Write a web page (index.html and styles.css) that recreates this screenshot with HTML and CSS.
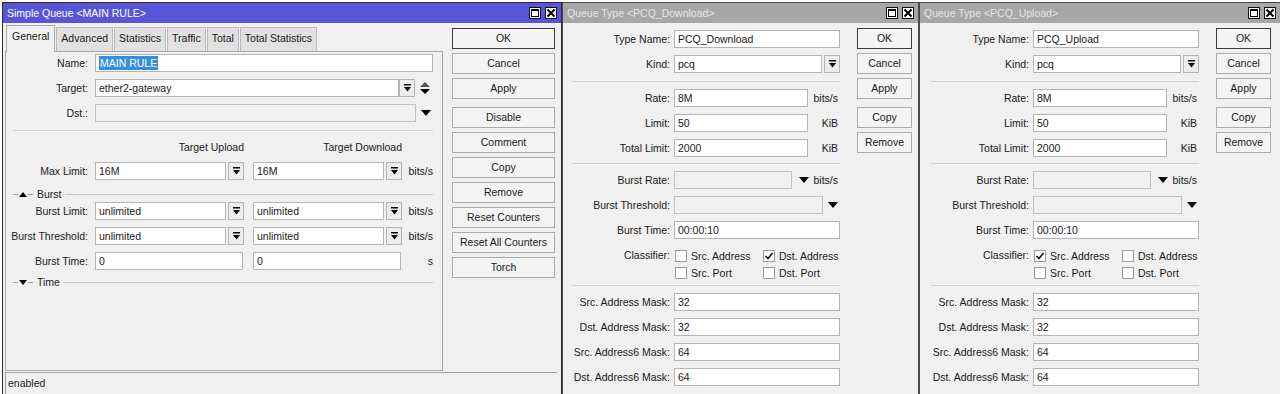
FILE: index.html
```html
<!DOCTYPE html>
<html lang="en">
<head>
    <meta charset="UTF-8">
    <meta name="viewport" content="width=device-width, initial-scale=1.0">
    <title>Simple Queue &lt;MAIN RULE&gt;</title>
    <link rel="stylesheet" href="styles.css">
</head>
<body>
<div class="desk">

    <!-- Simple Queue window -->
    <div class="win win-main">
        <div class="titlebar active">
            <span>Simple Queue &lt;MAIN RULE&gt;</span>
            <div class="wctl">
                <span class="wbox"><svg width="10" height="10" viewBox="0 0 10 10"><rect x="1.5" y="1.5" width="7" height="7" fill="none" stroke="#000"/><rect x="1" y="1" width="8" height="2"/></svg></span>
                <span class="wbox"><svg width="10" height="10" viewBox="0 0 10 10"><path d="M1.5 1.5l7 7M8.5 1.5l-7 7" stroke="#000" stroke-width="2"/></svg></span>
            </div>
        </div>
        <div class="main-body">
            <div class="main-left">
                <div class="tabs">
                    <div class="tab on">General</div>
                    <div class="tab">Advanced</div>
                    <div class="tab">Statistics</div>
                    <div class="tab">Traffic</div>
                    <div class="tab">Total</div>
                    <div class="tab">Total Statistics</div>
                </div>
                <div class="panel">
                    <div class="row first">
                        <div class="lbl">Name:</div>
                        <div class="fields"><div class="inp w-full"><span class="sel">MAIN RULE</span></div></div>
                    </div>
                    <div class="row">
                        <div class="lbl">Target:</div>
                        <div class="fields">
                            <div class="inp w-target">ether2-gateway</div>
                            <div class="ddb"><svg width="7" height="8" viewBox="0 0 7 8"><rect width="7" height="1.5"/><path d="M0 3h7L3.5 7.5z"/></svg></div>
                            <div class="side-ico"><svg width="10" height="12" viewBox="0 0 10 12"><path d="M0 5L5 0l5 5z" fill="#555"/><path d="M0 7h10l-5 5z"/></svg></div>
                        </div>
                    </div>
                    <div class="row">
                        <div class="lbl">Dst.:</div>
                        <div class="fields">
                            <div class="inp dis w-dst"></div>
                            <div class="side-ico"><svg width="10" height="6" viewBox="0 0 10 6"><path d="M0 0h10L5 6z"/></svg></div>
                        </div>
                    </div>
                    <div class="sep"></div>
                    <div class="col-head">
                        <div class="lbl"></div>
                        <div class="colh">Target Upload</div>
                        <div class="colh second">Target Download</div>
                    </div>
                    <div class="row head-next">
                        <div class="lbl">Max Limit:</div>
                        <div class="fields">
                            <div class="inp w-half">16M</div>
                            <div class="ddb near"><svg width="7" height="8" viewBox="0 0 7 8"><rect width="7" height="1.5"/><path d="M0 3h7L3.5 7.5z"/></svg></div>
                            <div class="inp w-half second">16M</div>
                            <div class="ddb near"><svg width="7" height="8" viewBox="0 0 7 8"><rect width="7" height="1.5"/><path d="M0 3h7L3.5 7.5z"/></svg></div>
                            <div class="unit">bits/s</div>
                        </div>
                    </div>
                    <div class="group">
                        <span class="gdash"></span>
                        <svg width="8" height="5" viewBox="0 0 8 5"><path d="M0 5L4 0l4 5z"/></svg>
                        <span class="gdash"></span>
                        <span class="gtext">Burst</span>
                        <span class="gline"></span>
                    </div>
                    <div class="row group-next">
                        <div class="lbl">Burst Limit:</div>
                        <div class="fields">
                            <div class="inp w-half">unlimited</div>
                            <div class="ddb near"><svg width="7" height="8" viewBox="0 0 7 8"><rect width="7" height="1.5"/><path d="M0 3h7L3.5 7.5z"/></svg></div>
                            <div class="inp w-half second">unlimited</div>
                            <div class="ddb near"><svg width="7" height="8" viewBox="0 0 7 8"><rect width="7" height="1.5"/><path d="M0 3h7L3.5 7.5z"/></svg></div>
                            <div class="unit">bits/s</div>
                        </div>
                    </div>
                    <div class="row">
                        <div class="lbl">Burst Threshold:</div>
                        <div class="fields">
                            <div class="inp w-half">unlimited</div>
                            <div class="ddb near"><svg width="7" height="8" viewBox="0 0 7 8"><rect width="7" height="1.5"/><path d="M0 3h7L3.5 7.5z"/></svg></div>
                            <div class="inp w-half second">unlimited</div>
                            <div class="ddb near"><svg width="7" height="8" viewBox="0 0 7 8"><rect width="7" height="1.5"/><path d="M0 3h7L3.5 7.5z"/></svg></div>
                            <div class="unit">bits/s</div>
                        </div>
                    </div>
                    <div class="row">
                        <div class="lbl">Burst Time:</div>
                        <div class="fields">
                            <div class="inp w-wide">0</div>
                            <div class="inp w-wide gap10">0</div>
                            <div class="unit">s</div>
                        </div>
                    </div>
                    <div class="group time">
                        <span class="gdash"></span>
                        <svg width="8" height="5" viewBox="0 0 8 5"><path d="M0 0h8L4 5z"/></svg>
                        <span class="gdash"></span>
                        <span class="gtext">Time</span>
                        <span class="gline"></span>
                    </div>
                </div>
            </div>
            <div class="btns">
                <div class="btn def">OK</div>
                <div class="btn">Cancel</div>
                <div class="btn">Apply</div>
                <div class="btn spaced">Disable</div>
                <div class="btn">Comment</div>
                <div class="btn">Copy</div>
                <div class="btn">Remove</div>
                <div class="btn">Reset Counters</div>
                <div class="btn">Reset All Counters</div>
                <div class="btn">Torch</div>
            </div>
        </div>
        <div class="status">enabled</div>
    </div>

    <!-- Queue Type: PCQ_Download -->
    <div class="win qwin win-down">
        <div class="titlebar">
            <span>Queue Type &lt;PCQ_Download&gt;</span>
            <div class="wctl">
                <span class="wbox"><svg width="10" height="10" viewBox="0 0 10 10"><rect x="1.5" y="1.5" width="7" height="7" fill="none" stroke="#000"/><rect x="1" y="1" width="8" height="2"/></svg></span>
                <span class="wbox"><svg width="10" height="10" viewBox="0 0 10 10"><path d="M1.5 1.5l7 7M8.5 1.5l-7 7" stroke="#000" stroke-width="2"/></svg></span>
            </div>
        </div>
        <div class="qbody">
            <div class="qform">
                <div class="qrow first">
                    <div class="qlbl">Type Name:</div>
                    <div class="qfields"><div class="inp w-q">PCQ_Download</div></div>
                </div>
                <div class="qrow">
                    <div class="qlbl">Kind:</div>
                    <div class="qfields">
                        <div class="inp w-kind">pcq</div>
                        <div class="ddb near"><svg width="7" height="8" viewBox="0 0 7 8"><rect width="7" height="1.5"/><path d="M0 3h7L3.5 7.5z"/></svg></div>
                    </div>
                </div>
                <div class="qsep"></div>
                <div class="qrow after-sep">
                    <div class="qlbl">Rate:</div>
                    <div class="qfields"><div class="inp w-rate">8M</div><div class="unit">bits/s</div></div>
                </div>
                <div class="qrow">
                    <div class="qlbl">Limit:</div>
                    <div class="qfields"><div class="inp w-rate">50</div><div class="unit">KiB</div></div>
                </div>
                <div class="qrow">
                    <div class="qlbl">Total Limit:</div>
                    <div class="qfields"><div class="inp w-rate">2000</div><div class="unit">KiB</div></div>
                </div>
                <div class="qsep tight"></div>
                <div class="qrow after-sep">
                    <div class="qlbl">Burst Rate:</div>
                    <div class="qfields">
                        <div class="inp dis w-brate"></div>
                        <div class="arrow"><svg width="10" height="6" viewBox="0 0 10 6"><path d="M0 0h10L5 6z"/></svg></div>
                        <div class="unit">bits/s</div>
                    </div>
                </div>
                <div class="qrow">
                    <div class="qlbl">Burst Threshold:</div>
                    <div class="qfields">
                        <div class="inp dis w-bthr"></div>
                        <div class="arrow thr"><svg width="10" height="6" viewBox="0 0 10 6"><path d="M0 0h10L5 6z"/></svg></div>
                    </div>
                </div>
                <div class="qrow">
                    <div class="qlbl">Burst Time:</div>
                    <div class="qfields"><div class="inp w-q">00:00:10</div></div>
                </div>
                <div class="cls">
                    <div class="qlbl">Classifier:</div>
                    <div class="cgrid">
                        <div class="cbi"><span class="cb"></span>Src. Address</div>
                        <div class="cbi"><span class="cb"><svg width="10" height="10" viewBox="0 0 10 10"><path d="M1.5 5l2.5 2.5L8.5 2" fill="none" stroke="#111" stroke-width="1.6"/></svg></span>Dst. Address</div>
                        <div class="cbi"><span class="cb"></span>Src. Port</div>
                        <div class="cbi"><span class="cb"></span>Dst. Port</div>
                    </div>
                </div>
                <div class="qsep mask-sep"></div>
                <div class="qrow after-sep">
                    <div class="qlbl">Src. Address Mask:</div>
                    <div class="qfields"><div class="inp w-q">32</div></div>
                </div>
                <div class="qrow">
                    <div class="qlbl">Dst. Address Mask:</div>
                    <div class="qfields"><div class="inp w-q">32</div></div>
                </div>
                <div class="qrow">
                    <div class="qlbl">Src. Address6 Mask:</div>
                    <div class="qfields"><div class="inp w-q">64</div></div>
                </div>
                <div class="qrow">
                    <div class="qlbl">Dst. Address6 Mask:</div>
                    <div class="qfields"><div class="inp w-q">64</div></div>
                </div>
            </div>
            <div class="qbtns">
                <div class="btn def">OK</div>
                <div class="btn">Cancel</div>
                <div class="btn">Apply</div>
                <div class="btn spaced">Copy</div>
                <div class="btn">Remove</div>
            </div>
        </div>
    </div>

    <!-- Queue Type: PCQ_Upload -->
    <div class="win qwin win-up">
        <div class="titlebar">
            <span>Queue Type &lt;PCQ_Upload&gt;</span>
            <div class="wctl">
                <span class="wbox"><svg width="10" height="10" viewBox="0 0 10 10"><rect x="1.5" y="1.5" width="7" height="7" fill="none" stroke="#000"/><rect x="1" y="1" width="8" height="2"/></svg></span>
                <span class="wbox"><svg width="10" height="10" viewBox="0 0 10 10"><path d="M1.5 1.5l7 7M8.5 1.5l-7 7" stroke="#000" stroke-width="2"/></svg></span>
            </div>
        </div>
        <div class="qbody">
            <div class="qform">
                <div class="qrow first">
                    <div class="qlbl">Type Name:</div>
                    <div class="qfields"><div class="inp w-q">PCQ_Upload</div></div>
                </div>
                <div class="qrow">
                    <div class="qlbl">Kind:</div>
                    <div class="qfields">
                        <div class="inp w-kind">pcq</div>
                        <div class="ddb near"><svg width="7" height="8" viewBox="0 0 7 8"><rect width="7" height="1.5"/><path d="M0 3h7L3.5 7.5z"/></svg></div>
                    </div>
                </div>
                <div class="qsep"></div>
                <div class="qrow after-sep">
                    <div class="qlbl">Rate:</div>
                    <div class="qfields"><div class="inp w-rate">8M</div><div class="unit">bits/s</div></div>
                </div>
                <div class="qrow">
                    <div class="qlbl">Limit:</div>
                    <div class="qfields"><div class="inp w-rate">50</div><div class="unit">KiB</div></div>
                </div>
                <div class="qrow">
                    <div class="qlbl">Total Limit:</div>
                    <div class="qfields"><div class="inp w-rate">2000</div><div class="unit">KiB</div></div>
                </div>
                <div class="qsep tight"></div>
                <div class="qrow after-sep">
                    <div class="qlbl">Burst Rate:</div>
                    <div class="qfields">
                        <div class="inp dis w-brate"></div>
                        <div class="arrow"><svg width="10" height="6" viewBox="0 0 10 6"><path d="M0 0h10L5 6z"/></svg></div>
                        <div class="unit">bits/s</div>
                    </div>
                </div>
                <div class="qrow">
                    <div class="qlbl">Burst Threshold:</div>
                    <div class="qfields">
                        <div class="inp dis w-bthr"></div>
                        <div class="arrow thr"><svg width="10" height="6" viewBox="0 0 10 6"><path d="M0 0h10L5 6z"/></svg></div>
                    </div>
                </div>
                <div class="qrow">
                    <div class="qlbl">Burst Time:</div>
                    <div class="qfields"><div class="inp w-q">00:00:10</div></div>
                </div>
                <div class="cls">
                    <div class="qlbl">Classifier:</div>
                    <div class="cgrid">
                        <div class="cbi"><span class="cb"><svg width="10" height="10" viewBox="0 0 10 10"><path d="M1.5 5l2.5 2.5L8.5 2" fill="none" stroke="#111" stroke-width="1.6"/></svg></span>Src. Address</div>
                        <div class="cbi"><span class="cb"></span>Dst. Address</div>
                        <div class="cbi"><span class="cb"></span>Src. Port</div>
                        <div class="cbi"><span class="cb"></span>Dst. Port</div>
                    </div>
                </div>
                <div class="qsep mask-sep"></div>
                <div class="qrow after-sep">
                    <div class="qlbl">Src. Address Mask:</div>
                    <div class="qfields"><div class="inp w-q">32</div></div>
                </div>
                <div class="qrow">
                    <div class="qlbl">Dst. Address Mask:</div>
                    <div class="qfields"><div class="inp w-q">32</div></div>
                </div>
                <div class="qrow">
                    <div class="qlbl">Src. Address6 Mask:</div>
                    <div class="qfields"><div class="inp w-q">64</div></div>
                </div>
                <div class="qrow">
                    <div class="qlbl">Dst. Address6 Mask:</div>
                    <div class="qfields"><div class="inp w-q">64</div></div>
                </div>
            </div>
            <div class="qbtns">
                <div class="btn def">OK</div>
                <div class="btn">Cancel</div>
                <div class="btn">Apply</div>
                <div class="btn spaced">Copy</div>
                <div class="btn">Remove</div>
            </div>
        </div>
    </div>

</div>
</body>
</html>
```

FILE: styles.css
```css
* {
    box-sizing: border-box;
}
body {
    margin: 0;
    background: #fff;
    font-family: "Liberation Sans", Arial, sans-serif;
    font-size: 10.5px;
    color: #1a1a1a;
}
.desk {
    display: flex;
    height: 394px;
    padding: 2px 0 0 2px;
    overflow: hidden;
}

/* windows */
.win {
    display: flex;
    flex-direction: column;
    flex-shrink: 0;
    background: #f0f0f0;
    border: 1px solid #2b2b2b;
    border-bottom: none;
}
.win-main {
    width: 560px;
}
.win-down {
    width: 357px;
    border-color: #4a4a4a;
}
.win-up {
    width: 361px;
    border-color: #4a4a4a;
    border-right: none;
}
.titlebar {
    height: 20px;
    flex-shrink: 0;
    display: flex;
    align-items: center;
    justify-content: space-between;
    padding: 0 4px 0 4px;
    background: #a7a7a7;
    color: #e4e4e4;
}
.titlebar.active {
    background: #5656d6;
    color: #fff;
}
.wctl {
    display: flex;
    gap: 4px;
}
.wbox {
    width: 12px;
    height: 12px;
    background: #fff;
    border: 1px solid #111;
    display: flex;
    align-items: center;
    justify-content: center;
}

/* simple queue body */
.main-body {
    display: flex;
    flex: 1;
    padding: 2px 5px 1px 2px;
}
.main-left {
    width: 438px;
    display: flex;
    flex-direction: column;
}
.tabs {
    display: flex;
    align-items: flex-end;
    height: 26px;
    padding-left: 1px;
}
.tab {
    height: 24px;
    padding: 4px 4px 0;
    border: 1px solid #bdbdbd;
    border-bottom: none;
    background: #e1e1e1;
    margin-right: 1px;
    white-space: nowrap;
}
.tab.on {
    height: 27px;
    margin-bottom: -1px;
    padding: 4px 5px 0;
    background: #f0f0f0;
    border-color: #a8a8a8;
    position: relative;
    z-index: 1;
}
.panel {
    flex: 1;
    border: 1px solid #a8a8a8;
    padding-top: 2px;
}
.row {
    display: flex;
    align-items: center;
    height: 18px;
    margin-top: 7px;
}
.row.first {
    margin-top: 0;
}
.row.head-next {
    margin-top: 9px;
}
.row.group-next {
    margin-top: 2px;
}
.lbl {
    width: 89px;
    flex-shrink: 0;
    padding-right: 7px;
    text-align: right;
    white-space: nowrap;
}
.fields {
    display: flex;
    align-items: center;
    width: 338px;
    height: 18px;
}
.inp {
    height: 18px;
    flex-shrink: 0;
    border: 1px solid #b4b4b4;
    background: #fff;
    padding: 0 3px;
    line-height: 16px;
    white-space: nowrap;
    overflow: hidden;
}
.inp.dis {
    background: #f0f0f0;
    border-color: #c2c2c2;
}
.sel {
    background: #3390e0;
    color: #fff;
    padding: 1px 1px;
}
.w-full {
    width: 338px;
}
.w-target {
    width: 304px;
}
.w-dst {
    width: 321px;
}
.w-half {
    width: 131px;
}
.w-half.second {
    margin-left: 9px;
}
.w-wide {
    width: 148px;
}
.gap10 {
    margin-left: 10px;
}
.ddb {
    width: 16px;
    height: 18px;
    flex-shrink: 0;
    border: 1px solid #b4b4b4;
    background: #ececec;
    display: flex;
    align-items: center;
    justify-content: center;
}
.ddb.near {
    margin-left: 2px;
}
.side-ico {
    display: flex;
    align-items: center;
    margin-left: 5px;
}
.unit {
    flex: 1;
    text-align: right;
    white-space: nowrap;
}
.sep {
    margin: 8px 0 0 7px;
    width: 420px;
    border-top: 1px solid #d0d0d0;
}
.col-head {
    display: flex;
    height: 12px;
    line-height: 12px;
    margin-top: 10px;
}
.colh {
    width: 149px;
    text-align: right;
}
.colh.second {
    margin-left: 9px;
}
.group {
    display: flex;
    align-items: center;
    height: 12px;
    width: 420px;
    margin: 8px 0 0 7px;
}
.group.time {
    margin-top: 6px;
}
.group svg {
    margin: 0 1px;
}
.gdash {
    width: 5px;
    border-top: 1px solid #a0a0a0;
}
.gtext {
    margin: 0 3px 0 4px;
}
.gline {
    flex: 1;
    border-top: 1px solid #c8c8c8;
}
.btns {
    display: flex;
    flex-direction: column;
    gap: 4px;
    width: 103px;
    margin-left: 9px;
    padding-top: 3px;
}
.btn {
    height: 21px;
    flex-shrink: 0;
    border: 1px solid #ababab;
    background: #f4f4f4;
    text-align: center;
    line-height: 19px;
    white-space: nowrap;
}
.btn.def {
    border-color: #3c3c3c;
}
.btn.spaced {
    margin-top: 4px;
}
.status {
    height: 22px;
    flex-shrink: 0;
    margin: 0 4px 0 2px;
    border-top: 1px solid #a0a0a0;
    border-left: 1px solid #a0a0a0;
    padding: 4px 0 0 2px;
}

/* queue type windows */
.qbody {
    display: flex;
    padding-top: 5px;
}
.win-up .qbody {
    padding-left: 2px;
}
.qform {
    width: 277px;
    margin-top: 2px;
}
.qrow {
    display: flex;
    align-items: center;
    height: 18px;
    margin-top: 7px;
}
.qrow.first {
    margin-top: 0;
}
.qrow.after-sep {
    margin-top: 7px;
}
.qlbl {
    width: 111px;
    flex-shrink: 0;
    padding-right: 4px;
    text-align: right;
    white-space: nowrap;
}
.qfields {
    width: 166px;
    height: 18px;
    display: flex;
    align-items: center;
}
.qfields .unit {
    padding-right: 2px;
}
.w-q {
    width: 166px;
}
.w-kind {
    width: 148px;
}
.w-rate {
    width: 134px;
}
.w-brate {
    width: 118px;
}
.w-bthr {
    width: 149px;
}
.arrow {
    display: flex;
    align-items: center;
    margin-left: 7px;
}
.arrow.thr {
    margin-left: 5px;
}
.qsep {
    margin: 8px 0 0 9px;
    width: 268px;
    border-top: 1px solid #d2d2d2;
}
.qsep.tight {
    margin-top: 6px;
}
.qsep.mask-sep {
    margin-top: 4px;
}
.cls {
    display: flex;
    margin-top: 8px;
}
.cls .qlbl {
    height: 17px;
    line-height: 17px;
}
.cgrid {
    display: grid;
    grid-template-columns: 88px 78px;
    grid-auto-rows: 17px;
}
.cbi {
    display: flex;
    align-items: center;
    gap: 4px;
    padding-left: 1px;
    white-space: nowrap;
}
.cb {
    width: 12px;
    height: 12px;
    border: 1px solid #9a9a9a;
    background: #fff;
    display: flex;
    align-items: center;
    justify-content: center;
}
.qbtns {
    width: 55px;
    margin-left: 17px;
    display: flex;
    flex-direction: column;
    gap: 4px;
}
```
